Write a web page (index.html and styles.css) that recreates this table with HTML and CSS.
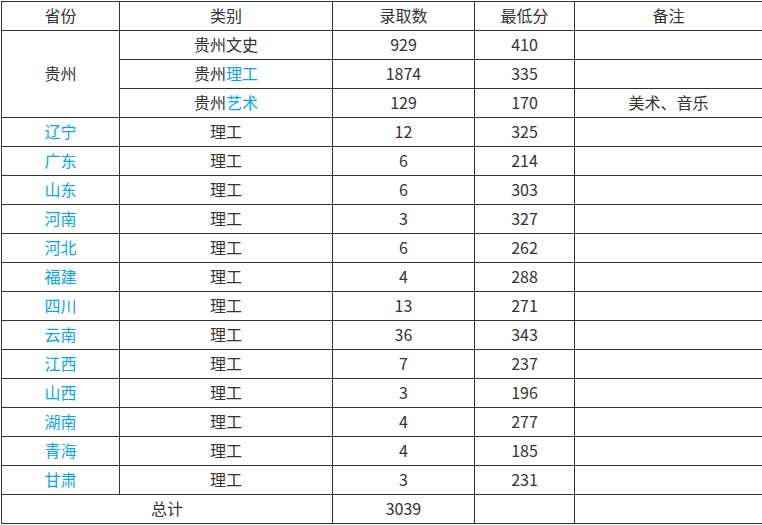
FILE: index.html
```html
<!DOCTYPE html>
<html lang="zh-CN">
<head>
<meta charset="utf-8">
<title>录取情况</title>
<link rel="stylesheet" href="styles.css">
</head>
<body>
<table class="score-table">
  <colgroup>
    <col class="c1"><col class="c2"><col class="c3"><col class="c4"><col class="c5">
  </colgroup>
  <tr><td>省份</td><td>类别</td><td>录取数</td><td>最低分</td><td>备注</td></tr>
  <tr><td rowspan="3">贵州</td><td>贵州文史</td><td>929</td><td>410</td><td></td></tr>
  <tr><td>贵州<span class="link">理工</span></td><td>1874</td><td>335</td><td></td></tr>
  <tr><td>贵州<span class="link">艺术</span></td><td>129</td><td>170</td><td>美术、音乐</td></tr>
  <tr><td class="link">辽宁</td><td>理工</td><td>12</td><td>325</td><td></td></tr>
  <tr><td class="link">广东</td><td>理工</td><td>6</td><td>214</td><td></td></tr>
  <tr><td class="link">山东</td><td>理工</td><td>6</td><td>303</td><td></td></tr>
  <tr><td class="link">河南</td><td>理工</td><td>3</td><td>327</td><td></td></tr>
  <tr><td class="link">河北</td><td>理工</td><td>6</td><td>262</td><td></td></tr>
  <tr><td class="link">福建</td><td>理工</td><td>4</td><td>288</td><td></td></tr>
  <tr><td class="link">四川</td><td>理工</td><td>13</td><td>271</td><td></td></tr>
  <tr><td class="link">云南</td><td>理工</td><td>36</td><td>343</td><td></td></tr>
  <tr><td class="link">江西</td><td>理工</td><td>7</td><td>237</td><td></td></tr>
  <tr><td class="link">山西</td><td>理工</td><td>3</td><td>196</td><td></td></tr>
  <tr><td class="link">湖南</td><td>理工</td><td>4</td><td>277</td><td></td></tr>
  <tr><td class="link">青海</td><td>理工</td><td>4</td><td>185</td><td></td></tr>
  <tr><td class="link">甘肃</td><td>理工</td><td>3</td><td>231</td><td></td></tr>
  <tr><td colspan="2">总计</td><td>3039</td><td></td><td></td></tr>
</table>
</body>
</html>
```
FILE: styles.css
```css
html, body {
  margin: 0;
  padding: 0;
  background: #fff;
}
body {
  padding: 1px 0 0 1px;
  font-family: "Noto Sans CJK SC", "Noto Sans", sans-serif;
  font-size: 16px;
  color: #333;
}
.score-table {
  border-collapse: collapse;
  table-layout: fixed;
  width: 761px;
}
.c1 { width: 118px; }
.c2 { width: 213px; }
.c3 { width: 142px; }
.c4 { width: 100px; }
.c5 { width: 188px; }
.score-table td {
  border: 1px solid #333;
  height: 26px;
  padding: 0 0 2px;
  text-align: center;
  vertical-align: middle;
  line-height: 20px;
}
.link {
  color: #08a4f0;
}
```
